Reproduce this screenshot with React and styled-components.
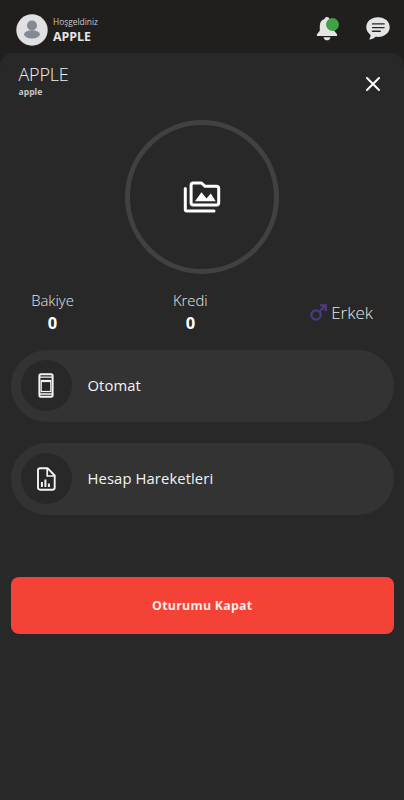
import styled, { createGlobalStyle } from "styled-components"

const GlobalStyle = createGlobalStyle`
    * {
        box-sizing: border-box;
        margin: 0;
        padding: 0;
    }

    body {
        background: #211e1e;
        font-family: "Open Sans", "Noto Sans", sans-serif;
        color: #e4e4e4;
    }
`

const Container = styled.div`
    height: 100vh;
    width: 100%;
    display: flex;
    flex-direction: column;
    background: #211e1e;
    overflow: hidden;
`

const Header = styled.header`
    height: 53px;
    flex-shrink: 0;
    display: flex;
    align-items: flex-start;
    padding: 14px 14px 0 16px;
`

const Welcome = styled.div`
    flex: 1;
    padding: 2px 0 0 5px;
`

const WelcomeText = styled.p`
    font-size: 8.4px;
    line-height: 12px;
    color: #c9c9c9;
`

const WelcomeName = styled.p`
    font-size: 12.4px;
    line-height: 17px;
    font-weight: 700;
`

const HeaderIcons = styled.div`
    display: flex;
    gap: 28px;
    padding-top: 2px;
`

const BellButton = styled.button`
    position: relative;
    height: 26px;
    width: 22px;
    border: none;
    background: transparent;
`

const Badge = styled.span`
    position: absolute;
    top: 2px;
    right: -1px;
    height: 13px;
    width: 13px;
    border-radius: 50%;
    background: #43a047;
`

const PlainButton = styled.button`
    height: ${props => props.$size}px;
    width: ${props => props.$size}px;
    border: none;
    background: transparent;
`

const Icon = styled.svg`
    display: block;
`

const Panel = styled.main`
    flex: 1;
    border-radius: 13px 13px 0 0;
    background: #282828;
    padding: 0 10px 0 10.5px;
`

const PanelTop = styled.div`
    height: 67px;
    display: flex;
    justify-content: space-between;
    padding: 9px 13px 0 8px;
`

const Title = styled.h1`
    font-size: 18px;
    line-height: 25px;
    font-weight: 300;
    letter-spacing: -0.2px;
    color: #f2f2f2;
`

const Subtitle = styled.p`
    margin-top: -1px;
    font-size: 8.6px;
    line-height: 12px;
    font-weight: 700;
    color: #c8c8c8;
`

const CloseWrap = styled.div`
    padding-top: 13px;
`

const PhotoPicker = styled.div`
    height: 154px;
    width: 154px;
    margin: 0 auto;
    border: 5px solid #414141;
    border-radius: 50%;
    display: grid;
    place-items: center;
`

const Stats = styled.div`
    height: 76px;
    display: flex;
    justify-content: space-between;
    padding: 16px 21px 0 20px;
`

const Stat = styled.div`
    width: 44px;
    text-align: center;

    & + & {
        margin-left: -4px;
    }
`

const StatLabel = styled.p`
    font-size: 14.8px;
    line-height: 21px;
    font-weight: 300;
    white-space: nowrap;
    color: #e6e6e6;
`

const StatValue = styled.p`
    font-size: 16.5px;
    line-height: 24px;
    font-weight: 700;
    color: #ffffff;
`

const Gender = styled.div`
    height: 46px;
    display: flex;
    align-items: center;
    gap: 4px;
    font-size: 17px;
    font-weight: 300;
    color: #e6e6e6;
`

const GenderText = styled.span`
    margin-top: -1px;
`

const Menu = styled.nav`
    display: flex;
    flex-direction: column;
    gap: 21px;
`

const MenuItem = styled.button`
    height: 72px;
    width: 100%;
    display: flex;
    align-items: center;
    gap: 16px;
    padding: 0 10px 1px;
    border: none;
    border-radius: 36px;
    background: #333333;
    color: #f4f4f4;
    font-family: inherit;
    font-size: 14.8px;
    letter-spacing: 0.1px;
`

const MenuIcon = styled.span`
    height: 51px;
    width: 51px;
    border-radius: 50%;
    display: grid;
    place-items: center;
    background: #282828;
`

const MenuLabel = styled.span`
    padding-bottom: 1px;
`

const LogoutButton = styled.button`
    height: 57px;
    width: 100%;
    margin-top: 62px;
    border: none;
    border-radius: 8px;
    background: #f44336;
    color: #fbe9e7;
    font-family: inherit;
    font-size: 12.4px;
    font-weight: 700;
    letter-spacing: 0.25px;
`

const AvatarIcon = () => (
    <Icon width="32" height="32" viewBox="0 0 32 32">
        <circle cx="16" cy="16" r="15.7" fill="#e1e1e3" />
        <circle cx="16" cy="11.5" r="5" fill="#838a93" />
        <ellipse cx="16" cy="20.3" rx="8" ry="4.1" fill="#838a93" />
    </Icon>
)

const BellIcon = () => (
    <Icon width="22" height="26" viewBox="0 0 22 26" fill="#e4e4e4">
        <path d="M11 1c-1.3 0-2.2.8-2.5 2.1C5.3 4.1 3.8 6.7 3.8 10v4.8L1 18.2c-.5.9-.1 1.8.8 1.8h18.4c.9 0 1.3-.9.8-1.8l-2.8-3.4V10c0-3.3-1.5-5.9-4.7-6.9C13.2 1.8 12.3 1 11 1z" />
        <path d="M7.5 21.2h7c-.3 1.9-1.7 3.1-3.5 3.1s-3.2-1.2-3.5-3.1z" />
    </Icon>
)

const ChatIcon = () => (
    <Icon width="24" height="26" viewBox="0 0 24 26">
        <path d="M12 1.300C5.200 1.300.3 5.600.3 11.300c0 3.200 1.600 5.800 4.300 7.600-.2 2-.8 3.500-1.500 4.700 2.600-.2 5-1.300 6.500-2.800 7.800 1.100 14.100-3.500 14.100-9.500C23.700 5.600 18.800 1.300 12 1.300z" fill="#e4e4e4" />
        <path d="M6.5 7.900h11.600M6.5 11.600h11.600M6.5 15.300h7.800" stroke="#282525" strokeWidth="1.400" strokeLinecap="round" />
    </Icon>
)

const CloseIcon = () => (
    <Icon width="16" height="16" viewBox="0 0 16 16">
        <path d="M2 2l12 12M14 2L2 14" stroke="#ffffff" strokeWidth="2" strokeLinecap="round" />
    </Icon>
)

const GalleryIcon = () => (
    <Icon width="38" height="32" viewBox="0 0 38 32">
        <path d="M2.300 7.500V28.500q0 1.500 1.500 1.500H31" fill="none" stroke="#ffffff" strokeWidth="3" strokeLinecap="round" />
        <path d="M10.300 2h8.200l3.300 3.200H33.500q2.200 0 2.200 2.200V21.800q0 2.200-2.200 2.200H10.300q-2.200 0-2.200-2.200V4.200Q8.100 2 10.300 2z" fill="none" stroke="#ffffff" strokeWidth="3" strokeLinejoin="round" />
        <path d="M12 20.300l6.500-9 5 6.200 4.300-5 4.900 7.800z" fill="#ffffff" />
    </Icon>
)

const MaleIcon = () => (
    <Icon width="17" height="19" viewBox="0 0 17 19" fill="none" stroke="#4d3a86" strokeWidth="2.2">
        <circle cx="6" cy="11" r="4.7" />
        <path d="M9.5 7.5L15.5 1.500M10 1.400h5.700v5.700" />
    </Icon>
)

const MachineIcon = () => (
    <Icon width="16" height="25" viewBox="0 0 16 25" fill="none" stroke="#f3f3f3">
        <rect x="1.400" y="1.200" width="13.200" height="22.600" rx="1.500" strokeWidth="2" />
        <path d="M2 4.200h12M2 21h12" strokeWidth="1.300" />
        <rect x="3.200" y="8" width="9.600" height="10.500" strokeWidth="1.200" />
        <path d="M3 8h10" strokeWidth="2.200" />
    </Icon>
)

const ReportIcon = () => (
    <Icon width="19" height="24" viewBox="0 0 19 24" fill="none" stroke="#f3f3f3">
        <path d="M3.200 1.200H10.500L17.700 8.500V20.500q0 2.200-2.200 2.200H3.200Q1 22.700 1 20.500V3.400q0-2.200 2.200-2.200z" strokeWidth="1.900" strokeLinejoin="round" />
        <path d="M10.200 1.500V9H17.400" strokeWidth="1.700" />
        <path d="M4.900 20v-5M8.400 20v-7.500M11.900 20v-3.500" strokeWidth="2" />
    </Icon>
)

const menuItems = [
    { label: "Otomat", icon: <MachineIcon /> },
    { label: "Hesap Hareketleri", icon: <ReportIcon /> },
]

const App = () => {
    return (
        <>
            <GlobalStyle />
            <Container>
                <Header>
                    <AvatarIcon />
                    <Welcome>
                        <WelcomeText>Hoşgeldiniz</WelcomeText>
                        <WelcomeName>APPLE</WelcomeName>
                    </Welcome>
                    <HeaderIcons>
                        <BellButton>
                            <BellIcon />
                            <Badge />
                        </BellButton>
                        <PlainButton $size={24}>
                            <ChatIcon />
                        </PlainButton>
                    </HeaderIcons>
                </Header>
                <Panel>
                    <PanelTop>
                        <div>
                            <Title>APPLE</Title>
                            <Subtitle>apple</Subtitle>
                        </div>
                        <CloseWrap>
                            <PlainButton $size={16}>
                                <CloseIcon />
                            </PlainButton>
                        </CloseWrap>
                    </PanelTop>
                    <PhotoPicker>
                        <GalleryIcon />
                    </PhotoPicker>
                    <Stats>
                        <Stat>
                            <StatLabel>Bakiye</StatLabel>
                            <StatValue>0</StatValue>
                        </Stat>
                        <Stat>
                            <StatLabel>Kredi</StatLabel>
                            <StatValue>0</StatValue>
                        </Stat>
                        <Gender>
                            <MaleIcon />
                            <GenderText>Erkek</GenderText>
                        </Gender>
                    </Stats>
                    <Menu>
                        {menuItems.map((item) => (
                            <MenuItem key={item.label}>
                                <MenuIcon>{item.icon}</MenuIcon>
                                <MenuLabel>{item.label}</MenuLabel>
                            </MenuItem>
                        ))}
                    </Menu>
                    <LogoutButton>Oturumu Kapat</LogoutButton>
                </Panel>
            </Container>
        </>
    )
}

export default App
